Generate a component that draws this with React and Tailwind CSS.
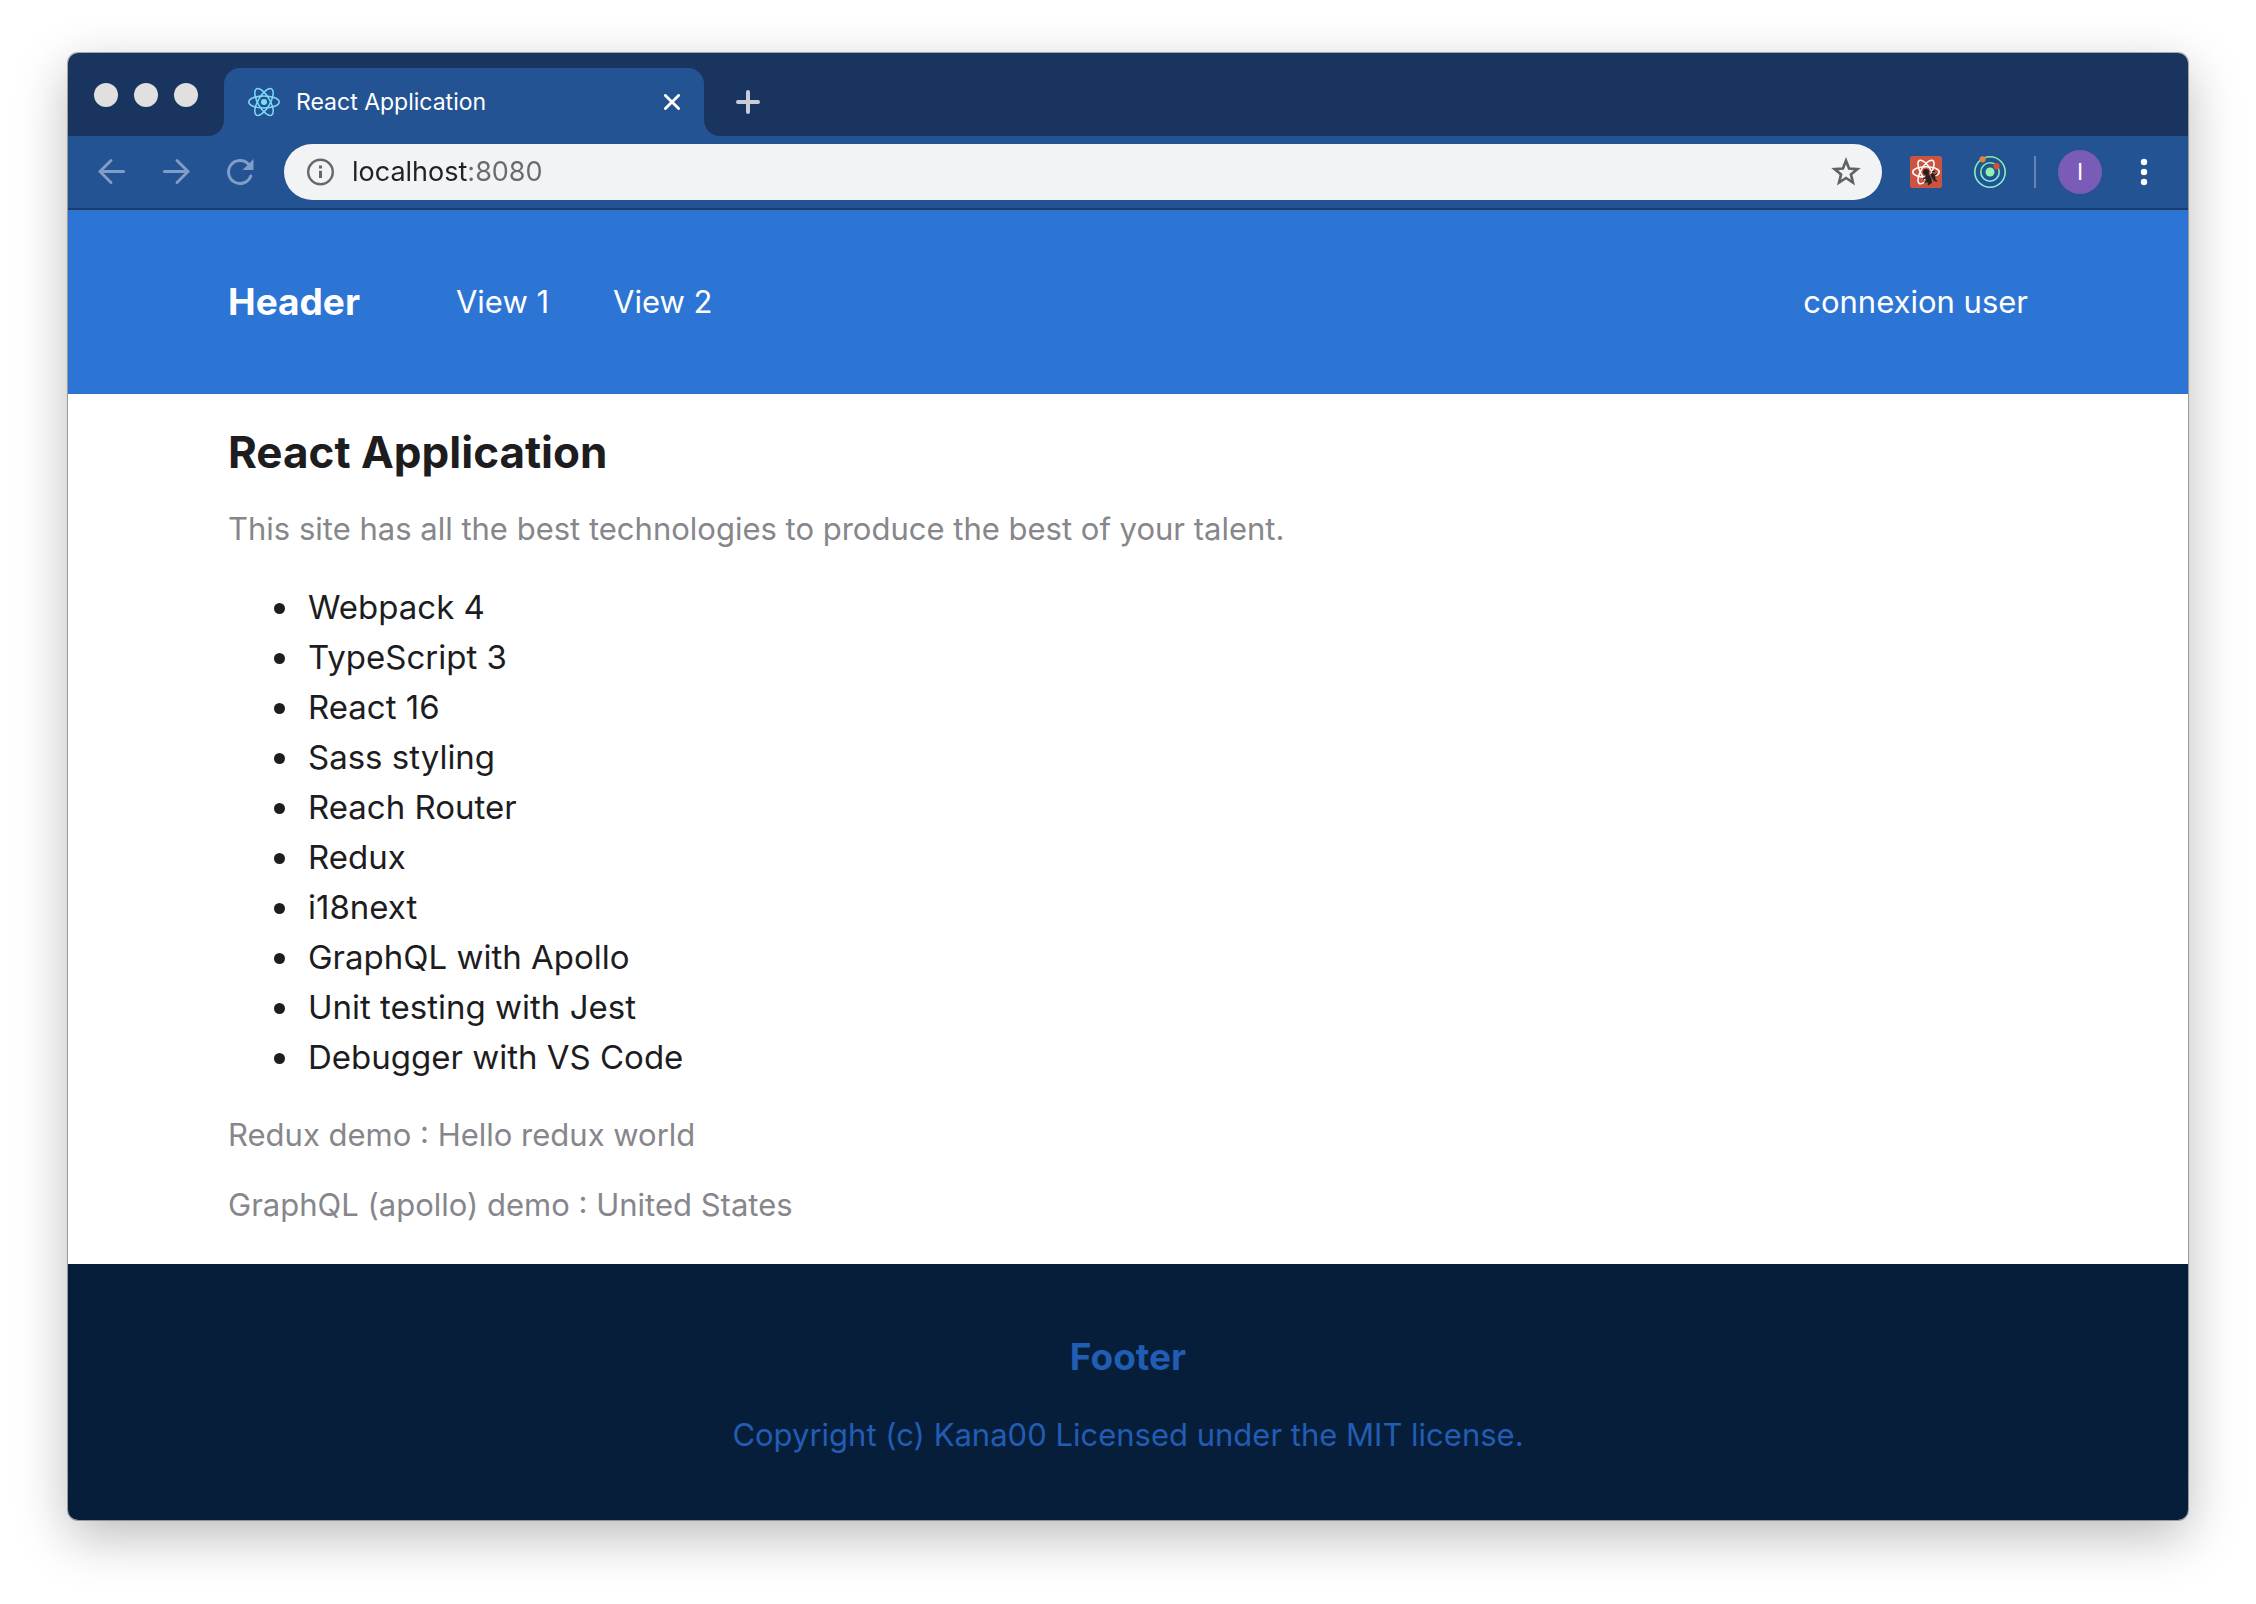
const technologies = [
  'Webpack 4',
  'TypeScript 3',
  'React 16',
  'Sass styling',
  'Reach Router',
  'Redux',
  'i18next',
  'GraphQL with Apollo',
  'Unit testing with Jest',
  'Debugger with VS Code',
];

function ReactLogo() {
  return (
    <svg viewBox="0 0 32 32" className="size-8 shrink-0" fill="none" stroke="#7ddcf8" strokeWidth="1.5" aria-hidden="true">
      <ellipse cx="16" cy="16" rx="15.2" ry="6" />
      <ellipse cx="16" cy="16" rx="15.2" ry="6" transform="rotate(60 16 16)" />
      <ellipse cx="16" cy="16" rx="15.2" ry="6" transform="rotate(120 16 16)" />
      <circle cx="16" cy="16" r="3" fill="#7ddcf8" stroke="none" />
    </svg>
  );
}

function ReactDevIcon() {
  return (
    <svg viewBox="0 0 32 32" className="size-8" fill="none" aria-hidden="true">
      <rect width="32" height="32" rx="2.5" fill="#cb5340" />
      <g stroke="#fff" strokeWidth="1.5">
        <ellipse cx="16" cy="16" rx="13.3" ry="5.2" />
        <ellipse cx="16" cy="16" rx="13.3" ry="5.2" transform="rotate(60 16 16)" />
        <ellipse cx="16" cy="16" rx="13.3" ry="5.2" transform="rotate(120 16 16)" />
      </g>
      <path d="M15 20l8-3 5 9-8 5-5-3z" fill="#cb5340" />
      <circle cx="16" cy="16" r="3" fill="#222" />
      <path d="M15.5 19.5l3.500-1.500 2.500 5 .500 4-3 1.500-2.500-3zM20.500 18l2.500-1.200 2.500 3.700 0 4-1.500 .500-2.500-3.500z" fill="#222" />
      <path d="M13 22.500l4-1M14.500 26.500l4-2M18 29l2-2M22 16l3-1M23.500 20l3.500-2.500M24.500 24.500l2.500 .500" stroke="#222" strokeWidth="1.400" />
    </svg>
  );
}

function ApolloIcon() {
  return (
    <svg viewBox="0 0 32 32" className="size-8" fill="none" aria-hidden="true">
      <defs>
        <linearGradient id="orbit" x1="0" y1="0" x2="0" y2="1">
          <stop offset="0" stopColor="#7df09a" />
          <stop offset="1" stopColor="#86f0dc" />
        </linearGradient>
      </defs>
      <circle cx="16" cy="16" r="15.200" stroke="url(#orbit)" strokeWidth="1.600" />
      <circle cx="16" cy="16" r="9.200" stroke="url(#orbit)" strokeWidth="1.600" />
      <circle cx="16" cy="16" r="4.500" fill="#8df2b0" />
      <circle cx="8.600" cy="3.300" r="3.100" fill="#e8833f" />
      <circle cx="22.500" cy="10.200" r="3.100" fill="#d9502f" />
    </svg>
  );
}

function TabStrip() {
  return (
    <div className="flex h-[83px] items-end bg-[#19355f]">
      <div className="flex w-[140px] items-center gap-4 self-start pt-[30px] pl-[26px]">
        <button aria-label="Close window" className="size-6 rounded-full bg-[#e0e0e0]" />
        <button aria-label="Minimize window" className="size-6 rounded-full bg-[#e0e0e0]" />
        <button aria-label="Zoom window" className="size-6 rounded-full bg-[#e0e0e0]" />
      </div>
      <div className="size-4 bg-[#245394]">
        <div className="size-4 rounded-br-2xl bg-[#19355f]" />
      </div>
      <div className="flex h-17 w-[480px] items-center rounded-t-2xl bg-[#245394] pr-6 pl-6">
        <ReactLogo />
        <span className="ml-4 grow text-[23px] text-white">React Application</span>
        <button aria-label="Close tab" className="text-white">
          <svg viewBox="0 0 16 16" className="size-4" stroke="currentColor" strokeWidth="2.800" strokeLinecap="round" aria-hidden="true">
            <path d="M1.400 1.400l13.200 13.200M14.600 1.400L1.400 14.600" />
          </svg>
        </button>
      </div>
      <div className="size-4 bg-[#245394]">
        <div className="size-4 rounded-bl-2xl bg-[#19355f]" />
      </div>
      <button aria-label="New tab" className="ml-4 flex h-17 items-center text-[#c6cdd7]">
        <svg viewBox="0 0 24 24" className="size-6" stroke="currentColor" strokeWidth="4" strokeLinecap="round" aria-hidden="true">
          <path d="M2 12h20M12 2v20" />
        </svg>
      </button>
    </div>
  );
}

function Toolbar() {
  return (
    <div className="flex h-[74px] items-center border-b-2 border-[#1b3b6b] bg-[#245394] pr-10 pl-7">
      <div className="flex items-center gap-8 text-[#7f9dc6]">
        <button aria-label="Back">
          <svg viewBox="0 0 32 32" className="size-8" fill="none" stroke="currentColor" strokeWidth="3" strokeLinecap="round" aria-hidden="true">
            <path d="M27.500 15.500H4M15 4.500L4 15.500l11 11" />
          </svg>
        </button>
        <button aria-label="Forward">
          <svg viewBox="0 0 32 32" className="size-8" fill="none" stroke="currentColor" strokeWidth="3" strokeLinecap="round" aria-hidden="true">
            <path d="M4.500 15.500H28M17 4.500l11 11-11 11" />
          </svg>
        </button>
        <button aria-label="Reload">
          <svg viewBox="0 0 32 32" className="size-8" fill="none" aria-hidden="true">
            <path d="M24.500 8.200A11.500 11.500 0 1 0 26.800 20" stroke="currentColor" strokeWidth="3" strokeLinecap="round" />
            <path d="M29.500 3v11H18.500z" fill="currentColor" />
          </svg>
        </button>
      </div>
      <div className="ml-7 flex h-14 grow items-center rounded-full bg-[#f1f3f5] pr-5 pl-[22px]">
        <button aria-label="View site information" className="text-[#66676a]">
          <svg viewBox="0 0 28 28" className="size-7" fill="none" aria-hidden="true">
            <circle cx="14.500" cy="14" r="12.300" stroke="currentColor" strokeWidth="2.400" />
            <path d="M14.500 12.700v7.300M14.500 7.500v3" stroke="currentColor" strokeWidth="3" />
          </svg>
        </button>
        <input
          aria-label="Address"
          defaultValue="localhost:8080"
          className="ml-[18px] min-w-0 grow bg-linear-[90deg,#202124_116px,#696a6d_116px] bg-clip-text text-[27px] text-transparent caret-black outline-none"
        />
        <button aria-label="Bookmark this page" className="text-[#5f6368]">
          <svg viewBox="0 0 24 24" className="size-8" fill="none" stroke="currentColor" strokeWidth="2" aria-hidden="true">
            <path d="M12 3.500l2.300 5.900 6.200.400-4.800 4 1.500 6.100L12 16.500l-5.200 3.400 1.500-6.100-4.800-4 6.200-.400z" />
          </svg>
        </button>
      </div>
      <button aria-label="React Developer Tools" className="ml-7">
        <ReactDevIcon />
      </button>
      <button aria-label="Apollo Client Developer Tools" className="ml-8">
        <ApolloIcon />
      </button>
      <div className="ml-7 h-8 w-0.5 bg-[#6384b4]" />
      <button aria-label="Profile" className="ml-[22px] size-11 rounded-full bg-[#7a5bb8] text-[23px] text-white">
        I
      </button>
      <button aria-label="Menu" className="ml-[38px] text-white">
        <svg viewBox="0 0 8 28" className="h-7 w-2" fill="currentColor" aria-hidden="true">
          <circle cx="4" cy="4" r="3.200" />
          <circle cx="4" cy="14" r="3.200" />
          <circle cx="4" cy="24" r="3.200" />
        </svg>
      </button>
    </div>
  );
}

function Site() {
  return (
    <div className="flex grow flex-col">
      <header className="flex items-center bg-[#2c75d5] px-40 py-[67px] leading-[50px] text-white">
        <a href="#home" className="text-[37px] leading-[50px] font-bold">Header</a>
        <nav className="ml-24 flex grow gap-16 text-[31px]">
          <a href="#view1">View 1</a>
          <a href="#view2">View 2</a>
        </nav>
        <a href="#user" className="text-[31px]">connexion user</a>
      </header>
      <main className="grow bg-white px-40 pt-8 pb-[34px] text-[31px] leading-[50px] text-[#1d1d1f]">
        <h1 className="text-[44px] leading-[52px] font-bold">React Application</h1>
        <p className="mt-[26px] text-[#86868b]">
          This site has all the best technologies to produce the best of your talent.
        </p>
        <ul className="mt-7 list-disc pl-[74px] text-[33px]">
          {technologies.map((name) => (
            <li key={name} className="pl-1.5">{name}</li>
          ))}
        </ul>
        <p className="mt-7 text-[#86868b]">Redux demo : Hello redux world</p>
        <p className="mt-5 text-[#86868b]">GraphQL (apollo) demo : United States</p>
      </main>
      <footer className="bg-[#071e3b] px-40 pt-[68px] pb-[60px] text-center leading-[50px] text-[#215db3]">
        <h2 className="text-[37px] leading-[50px] font-bold">Footer</h2>
        <p className="mt-7 text-[31px]">Copyright (c) Kana00 Licensed under the MIT license.</p>
      </footer>
    </div>
  );
}

export default function App() {
  return (
    <div className="flex min-h-screen flex-col bg-white px-[68px] pt-[53px] pb-[84px] font-[Inter,sans-serif]">
      <div className="flex grow flex-col overflow-hidden rounded-[10px] shadow-[0_0_0_1px_rgba(0,0,0,0.3),0_16px_52px_rgba(0,0,0,0.27)]">
        <TabStrip />
        <Toolbar />
        <Site />
      </div>
    </div>
  );
}
